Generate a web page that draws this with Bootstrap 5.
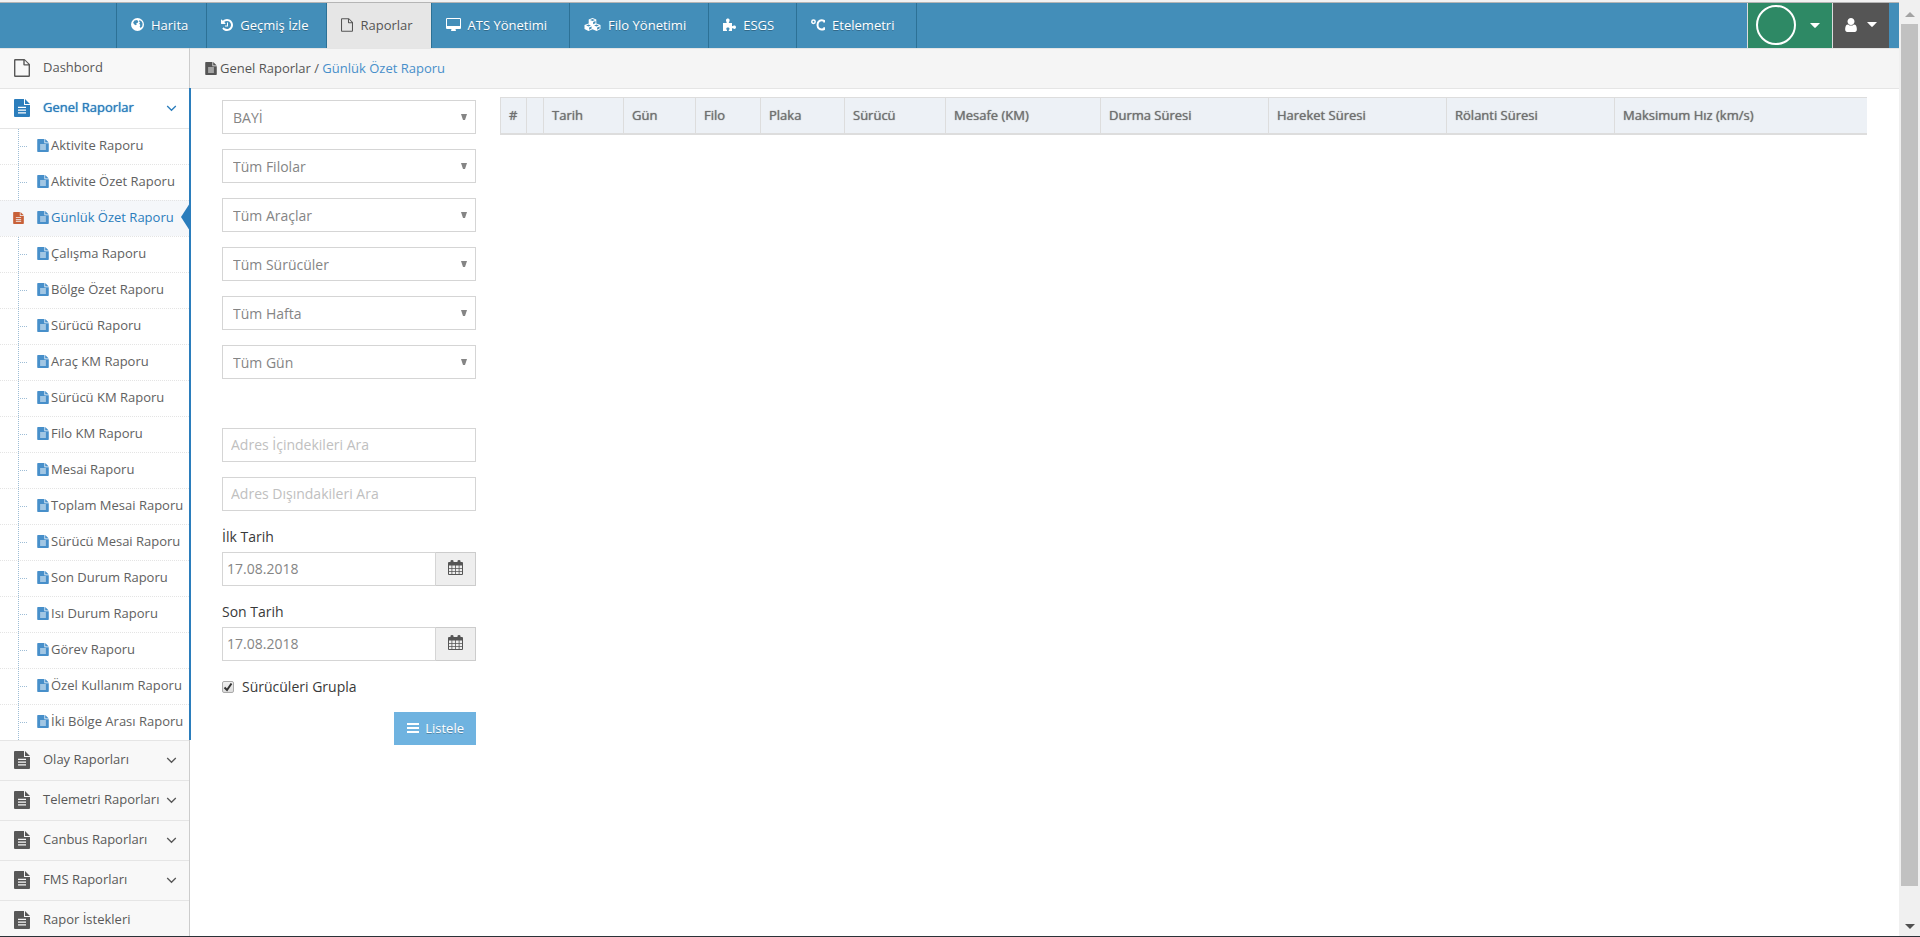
<!DOCTYPE html>
<html lang="tr">
<head>
<meta charset="utf-8">
<meta name="viewport" content="width=device-width, initial-scale=1">
<title>Günlük Özet Raporu</title>
<link href="https://cdn.jsdelivr.net/npm/bootstrap@5.3.0/dist/css/bootstrap.min.css" rel="stylesheet">
<style>
body { font: 13px/20px "Open Sans", sans-serif; color: #393939; background: #fff; }
svg { display: block; flex: none; fill: currentColor; }
a { text-decoration: none; color: inherit; }
.shell { height: 100vh; border-bottom: 1px solid #2b3238; }
.view { border-top: 2px solid #f2f2f2; }

/* top bar */
.topbar { height: 46px; background: #438eb9; border-top: 1px solid #b5b5b5; color: #fff; }
.brand-slot { width: 117px; border-right: 1px solid #2c7196; }
.topbar .nav-link { padding: 8px 18px 10px 14px; gap: 7px; color: #fff; border-right: 1px solid #2c7196; text-shadow: 0 1px 0 rgba(0,0,0,.25); line-height: 20px; }
.topbar .nav-link.roomy { padding-right: 22px; }
.topbar .nav-link.active { background: #e6e6e6; color: #555; text-shadow: none; }
.tool { border: 0; border-left: 1px solid #ddd; color: #fff; padding: 0; border-radius: 0; }
.tool-green { width: 85px; background: #2e8965; padding: 0 12px 0 8px; }
.tool-dark { width: 57px; background: #555; padding: 0 12px 2px 11px; margin-right: 10px; }
.ring { width: 40px; height: 40px; border: 2px solid #fff; border-radius: 50%; margin-bottom: 2px; }

/* side menu */
.side { width: 190px; background: #f8f8f8; border-right: 1px solid #ccc; }
.side-item { border-top: 1px solid #e5e5e5; height: 40px; padding: 0 12px 3px 14px; color: #585858; white-space: nowrap; }
.side-item > svg { margin-top: 2px; }
.side-item > svg:first-child { margin-right: 13px; }
.side-open { position: relative; background: #fff; }
.side-open::after { content: ""; position: absolute; right: -2px; top: 0; bottom: 0; width: 2px; background: #2b7dbc; }
.side-open > .side-item { color: #2b7dbc; text-shadow: 0 0 1px #2b7dbc; }
.sub { position: relative; border-top: 1px solid #e5e5e5; }
.sub::before { content: ""; position: absolute; left: 18px; top: 0; bottom: 0; border-left: 1px dotted #9dbdd6; }
.sub li { position: relative; height: 36px; border-top: 1px dotted #e4e4e4; }
.sub li:first-child { border-top: 0; height: 35px; }
.sub li::before { content: ""; position: absolute; left: 20px; top: 17px; width: 7px; border-top: 1px dotted #9dbdd6; }
.sub a { height: 35px; padding: 0 0 4px 37px; gap: 2px; color: #616161; white-space: nowrap; }
.sub a > svg { color: #478fca; margin-top: 1px; }
.sub .current { background: #f5f7fa; }
.sub .current::before { display: none; }
.sub .current a { color: #2b7dbc; }
.sub .current::after { content: ""; position: absolute; right: -1px; top: 2px; border: solid transparent; border-width: 14px 9px 14px 0; border-right-color: #2b7dbc; }
.mark-now { position: absolute; left: 13px; top: 11px; color: #c86139; }

/* content */
.crumbs { height: 41px; background: #f5f5f5; border-top: 1px solid #e5e5e5; border-bottom: 1px solid #e5e5e5; padding: 0 0 1px 15px; gap: 3px; color: #555; }
.crumbs a { color: #478fca; }
.work { padding: 8px 34px 0 32px; gap: 24px; }
.filters { width: 254px; gap: 15px; padding-top: 3px; font-size: 14px; line-height: 21px; }
.filters .form-control, .filters .form-select { height: 34px; border: 1px solid #d5d5d5; border-radius: 0; font-size: 14px; line-height: 20px; color: #858585; padding: 5px 8px 7px; }
.filters .form-select { padding: 7px 10px 5px; background: #fff url("data:image/svg+xml,%3Csvg xmlns='http://www.w3.org/2000/svg' width='6' height='6'%3E%3Cpath d='M0 0h6L4 6H2z' fill='%23858585'/%3E%3C/svg%3E") no-repeat right 8px top 13px / 6px 6px; }
.filters .form-control::placeholder { color: #c0c0c0; opacity: 1; }
.filters .date-box { padding-left: 4px; }
.filters label { display: block; }
.date-label { margin-bottom: 5px; }
.cal-btn { width: 41px; background: #eee; border: 1px solid #ccc; border-left: 0; border-radius: 0; color: #555; padding: 0 0 3px; }
.spare { height: 19px; }
.tick { appearance: none; width: 12px; height: 12px; margin: 0; border: 1px solid #aaa; border-radius: 2px; background: linear-gradient(#f0f0f0, #dcdcdc); }
.tick:checked { background: url("data:image/svg+xml,%3Csvg xmlns='http://www.w3.org/2000/svg' width='10' height='10'%3E%3Cpath d='M1.500 5.500L4 8 8.500 1.500' fill='none' stroke='%23333' stroke-width='2'/%3E%3C/svg%3E") center no-repeat, linear-gradient(#f0f0f0, #dcdcdc); }
.btn-list { background: #6fb3e0; color: #fff; border: 0; border-radius: 0; height: 33px; padding: 0 12px 1px 13px; gap: 6px; font-size: 13px; line-height: 20px; text-shadow: 0 1px 0 rgba(0,0,0,.25); }
.report { table-layout: fixed; width: 100%; margin: 0; }
.report th { height: 36px; padding: 0 8px; background: #edf1f6; color: #707070; font-weight: 400; text-shadow: 0 0 1px #707070; border: solid #ddd; border-width: 1px 0 2px 1px; white-space: nowrap; vertical-align: middle; }

/* scroll gutter */
.gutter { width: 21px; background: #f0f0f0; padding: 12px 2px 7px; }
.gutter-thumb { flex: 862; background: #c1c1c1; width: 17px; margin-top: 7px; }
.gutter-rest { flex: 38; }
</style>
</head>
<body>
<svg width="0" height="0" class="position-absolute" aria-hidden="true">
  <symbol id="doc" viewBox="0 0 16 18"><path fill-rule="evenodd" d="M1 0h9v6h6v11a1 1 0 0 1-1 1H1a1 1 0 0 1-1-1V1a1 1 0 0 1 1-1zM4 7.700v1.300h8V7.700zM4 10.400v1.300h8v-1.300zM4 13.200v1.300h8v-1.300zM11 0l5 5h-5z"/></symbol>
  <symbol id="page" viewBox="0 0 16 18"><path fill-rule="evenodd" d="M1.200 0H10.500L16 5.300V16.800A1.200 1.200 0 0 1 14.800 18H1.200A1.200 1.200 0 0 1 0 16.800V1.200A1.200 1.200 0 0 1 1.200 0zM1.400 1.400V16.600H14.600V6.600H10.300A1 1 0 0 1 9.300 5.600V1.400zM10.700 1.600V5.200H14.300z"/></symbol>
  <symbol id="chev" viewBox="0 0 10 7"><path d="M.7 1l4.300 4.300L9.300 1" fill="none" stroke="currentColor" stroke-width="1.300"/></symbol>
  <symbol id="caret" viewBox="0 0 10 5"><path d="M0 0h10L5.500 4.700h-1z"/></symbol>
  <symbol id="globe" viewBox="0 0 12 12"><path fill-rule="evenodd" d="M6 0a6 6 0 1 1 0 12A6 6 0 0 1 6 0zM3.200 2.300L2 4.200l.8 1.600 1.600.8 1-.9-.6-.9 1.400-.4.600-1.200L5.600 1.800zM8 1.900l-.6 1.300 1 .8-.8 1.100 1 1.400-.6 1.300.9 1.400 1.500-1.600.3-2.400-.6-1.800z"/></symbol>
  <symbol id="history" viewBox="128 128 1536 1536"><path d="M1664 896q0 156-61 298t-164 245-245 164-298 61q-172 0-327-72.500t-264-204.500q-7-10-6.500-22.500t8.500-20.500l137-138q10-9 25-9 16 2 23 12 73 95 179 147t225 52q104 0 198.500-40.500t163.500-109.500 109.500-163.500 40.500-198.500-40.500-198.500-109.500-163.500-163.500-109.500-198.500-40.500q-98 0-188 35.500t-160 101.500l137 138q31 30 14 69-17 40-59 40h-448q-26 0-45-19t-19-45v-448q0-42 40-59 39-17 69 14l130 129q107-101 244.500-156.500t284.500-55.500q156 0 298 61t245 164 164 245 61 298zm-640-288v448q0 14-9 23t-23 9h-320q-14 0-23-9t-9-23v-64q0-14 9-23t23-9h224v-352q0-14 9-23t23-9h64q14 0 23 9t9 23z"/></symbol>
  <symbol id="screen" viewBox="-64 0 1920 1664"><path d="M1728 992v-832q0-13-9.500-22.500t-22.500-9.500h-1600q-13 0-22.500 9.500t-9.500 22.500v832q0 13 9.500 22.500t22.500 9.500h1600q13 0 22.500-9.500t9.500-22.500zm128-832v1088q0 66-47 113t-113 47h-544q0 37 16 77.500t32 71 16 43.500q0 26-19 45t-45 19h-512q-26 0-45-19t-19-45q0-14 16-44t32-70 16-78h-544q-66 0-113-47t-47-113v-1088q0-66 47-113t113-47h1600q66 0 113 47t47 113z"/></symbol>
  <symbol id="cubes" viewBox="0 0 17 13"><path fill-rule="evenodd" d="M8.500 0l3.800 1.500v4L16.500 7v4L12.600 13 8.500 11.200 4.400 13 .5 11V7l4.200-1.500v-4zM8.500 1L6 2l2.500 1L11 2zM9.100 4v2.200L11.500 5.200V3zM4.500 6.500L2.100 7.500l2.400 1 2.400-1zM5.100 9.500v2.200l2.500-1.100V8.500zM12.500 6.500l-2.400 1 2.400 1 2.400-1zM13.100 9.500v2.200l2.500-1.100V8.500z"/></symbol>
  <symbol id="puzzle" viewBox="0 0 13 13"><path d="M0 5h3.600C4 4 2.800 3.500 3 2c.2-1 .9-1.500 1.800-1.500S6.500 1 6.600 2C6.800 3.500 5.500 4 5.900 5H9v3c.8.500 1.400-.5 2.300-.5 1 0 1.700.7 1.700 1.700s-.7 1.700-1.700 1.700c-.9 0-1.500-1-2.300-.5V13H5.800c-.3-1 .7-1.200.7-2.200 0-.8-.7-1.300-1.600-1.300s-1.600.5-1.600 1.300c0 1 1 1.200.7 2.200H0z"/></symbol>
  <symbol id="person" viewBox="256 128 1280 1536"><path d="M1536 1399q0 109-62.500 187t-150.500 78h-854q-88 0-150.500-78t-62.500-187q0-85 8.500-160.500t31.500-152 58.500-131 94-89 134.500-34.500q131 128 313 128t313-128q76 0 134.500 34.500t94 89 58.500 131 31.500 152 8.500 160.500zm-256-887q0 159-112.500 271.500t-271.500 112.500-271.500-112.500-112.500-271.500 112.500-271.500 271.500-112.500 271.500 112.500 112.500 271.500z"/></symbol>
  <symbol id="cal" viewBox="0 0 15 15"><path fill-rule="evenodd" d="M2.500 2V1a1.500 1 0 0 1 3 0v1h4V1a1.500 1 0 0 1 3 0v1H14a1 1 0 0 1 1 1v11a1 1 0 0 1-1 1H1a1 1 0 0 1-1-1V3a1 1 0 0 1 1-1zM1 5.500V8h2.500V5.500zm3.300 0V8h2.800V5.500zm3.600 0V8h2.800V5.500zm3.600 0V8H14V5.500zM1 8.700v2.500h2.500V8.700zm3.300 0v2.500h2.800V8.700zm3.600 0v2.500h2.800V8.700zm3.600 0v2.500H14V8.700zM1 12v2h2.500v-2zm3.300 0v2h2.800v-2zm3.600 0v2h2.800v-2zm3.600 0v2H14v-2z"/></symbol>
  <symbol id="degree" viewBox="0 0 14 12"><g fill="none" stroke="currentColor"><circle cx="2.500" cy="2.800" r="1.700" stroke-width="1.500"/><path d="M13.200 3.600V1.900C9.500.4 6.500 2.200 6.500 6s3 5.500 6.800 4V8.200" stroke-width="2"/></g></symbol>
  <symbol id="bars" viewBox="0 0 12 10"><path d="M0 0h12v2H0zM0 4h12v2H0zM0 8h12v2H0z"/></symbol>
</svg>

<div class="shell d-flex overflow-hidden">
  <div class="view d-flex flex-column flex-grow-1 overflow-hidden">
    <header class="topbar d-flex flex-shrink-0">
      <div class="brand-slot flex-shrink-0"></div>
      <nav class="nav flex-nowrap flex-grow-1">
        <a class="nav-link d-flex align-items-center" href="#"><svg width="13" height="13"><use href="#globe"/></svg>Harita</a>
        <a class="nav-link d-flex align-items-center" href="#"><svg width="12" height="12"><use href="#history"/></svg>Geçmiş İzle</a>
        <a class="nav-link active d-flex align-items-center" href="#"><svg width="12" height="14"><use href="#page"/></svg>Raporlar</a>
        <a class="nav-link roomy d-flex align-items-center" href="#"><svg width="15" height="13"><use href="#screen"/></svg>ATS Yönetimi</a>
        <a class="nav-link roomy d-flex align-items-center" href="#"><svg width="17" height="13"><use href="#cubes"/></svg>Filo Yönetimi</a>
        <a class="nav-link roomy d-flex align-items-center" href="#"><svg width="13" height="13"><use href="#puzzle"/></svg>ESGS</a>
        <a class="nav-link roomy d-flex align-items-center" href="#"><svg width="14" height="12"><use href="#degree"/></svg>Etelemetri</a>
      </nav>
      <button type="button" class="tool tool-green d-flex align-items-center justify-content-between" aria-label="Firma"><span class="ring"></span><svg width="10" height="5"><use href="#caret"/></svg></button>
      <button type="button" class="tool tool-dark d-flex align-items-center justify-content-between" aria-label="Hesap"><svg width="14" height="14"><use href="#person"/></svg><svg width="10" height="5"><use href="#caret"/></svg></button>
    </header>

    <div class="d-flex flex-grow-1">
      <aside class="side flex-shrink-0">
        <a class="side-item d-flex align-items-center" href="#"><svg width="16" height="18"><use href="#page"/></svg>Dashbord</a>
        <div class="side-open">
          <a class="side-item d-flex align-items-center" href="#"><svg width="16" height="18"><use href="#doc"/></svg>Genel Raporlar<svg class="ms-auto" width="11" height="7"><use href="#chev"/></svg></a>
          <ul class="sub list-unstyled m-0">
            <li><a class="d-flex align-items-center" href="#"><svg width="12" height="13"><use href="#doc"/></svg>Aktivite Raporu</a></li>
            <li><a class="d-flex align-items-center" href="#"><svg width="12" height="13"><use href="#doc"/></svg>Aktivite Özet Raporu</a></li>
            <li class="current"><svg class="mark-now" width="11" height="12"><use href="#doc"/></svg><a class="d-flex align-items-center" href="#"><svg width="12" height="13"><use href="#doc"/></svg>Günlük Özet Raporu</a></li>
            <li><a class="d-flex align-items-center" href="#"><svg width="12" height="13"><use href="#doc"/></svg>Çalışma Raporu</a></li>
            <li><a class="d-flex align-items-center" href="#"><svg width="12" height="13"><use href="#doc"/></svg>Bölge Özet Raporu</a></li>
            <li><a class="d-flex align-items-center" href="#"><svg width="12" height="13"><use href="#doc"/></svg>Sürücü Raporu</a></li>
            <li><a class="d-flex align-items-center" href="#"><svg width="12" height="13"><use href="#doc"/></svg>Araç KM Raporu</a></li>
            <li><a class="d-flex align-items-center" href="#"><svg width="12" height="13"><use href="#doc"/></svg>Sürücü KM Raporu</a></li>
            <li><a class="d-flex align-items-center" href="#"><svg width="12" height="13"><use href="#doc"/></svg>Filo KM Raporu</a></li>
            <li><a class="d-flex align-items-center" href="#"><svg width="12" height="13"><use href="#doc"/></svg>Mesai Raporu</a></li>
            <li><a class="d-flex align-items-center" href="#"><svg width="12" height="13"><use href="#doc"/></svg>Toplam Mesai Raporu</a></li>
            <li><a class="d-flex align-items-center" href="#"><svg width="12" height="13"><use href="#doc"/></svg>Sürücü Mesai Raporu</a></li>
            <li><a class="d-flex align-items-center" href="#"><svg width="12" height="13"><use href="#doc"/></svg>Son Durum Raporu</a></li>
            <li><a class="d-flex align-items-center" href="#"><svg width="12" height="13"><use href="#doc"/></svg>Isı Durum Raporu</a></li>
            <li><a class="d-flex align-items-center" href="#"><svg width="12" height="13"><use href="#doc"/></svg>Görev Raporu</a></li>
            <li><a class="d-flex align-items-center" href="#"><svg width="12" height="13"><use href="#doc"/></svg>Özel Kullanım Raporu</a></li>
            <li><a class="d-flex align-items-center" href="#"><svg width="12" height="13"><use href="#doc"/></svg>İki Bölge Arası Raporu</a></li>
          </ul>
        </div>
        <a class="side-item d-flex align-items-center" href="#"><svg width="16" height="18"><use href="#doc"/></svg>Olay Raporları<svg class="ms-auto" width="11" height="7"><use href="#chev"/></svg></a>
        <a class="side-item d-flex align-items-center" href="#"><svg width="16" height="18"><use href="#doc"/></svg>Telemetri Raporları<svg class="ms-auto" width="11" height="7"><use href="#chev"/></svg></a>
        <a class="side-item d-flex align-items-center" href="#"><svg width="16" height="18"><use href="#doc"/></svg>Canbus Raporları<svg class="ms-auto" width="11" height="7"><use href="#chev"/></svg></a>
        <a class="side-item d-flex align-items-center" href="#"><svg width="16" height="18"><use href="#doc"/></svg>FMS Raporları<svg class="ms-auto" width="11" height="7"><use href="#chev"/></svg></a>
        <a class="side-item d-flex align-items-center" href="#"><svg width="16" height="18"><use href="#doc"/></svg>Rapor İstekleri</a>
      </aside>

      <main class="flex-grow-1">
        <div class="crumbs d-flex align-items-center"><svg width="12" height="13"><use href="#doc"/></svg><span>Genel Raporlar / <a href="#">Günlük Özet Raporu</a></span></div>
        <div class="work d-flex align-items-start">
          <form class="filters d-flex flex-column flex-shrink-0">
            <select class="form-select" aria-label="Bayi"><option>BAYİ</option></select>
            <select class="form-select" aria-label="Filo"><option>Tüm Filolar</option></select>
            <select class="form-select" aria-label="Araç"><option>Tüm Araçlar</option></select>
            <select class="form-select" aria-label="Sürücü"><option>Tüm Sürücüler</option></select>
            <select class="form-select" aria-label="Hafta"><option>Tüm Hafta</option></select>
            <select class="form-select" aria-label="Gün"><option>Tüm Gün</option></select>
            <div class="spare"></div>
            <input class="form-control" type="text" placeholder="Adres İçindekileri Ara" aria-label="Adres İçindekileri Ara">
            <input class="form-control" type="text" placeholder="Adres Dışındakileri Ara" aria-label="Adres Dışındakileri Ara">
            <div>
              <label class="date-label" for="first">İlk Tarih</label>
              <div class="input-group"><input class="form-control date-box" id="first" type="text" value="17.08.2018"><button type="button" class="cal-btn d-flex align-items-center justify-content-center" aria-label="İlk tarihi seç"><svg width="15" height="15"><use href="#cal"/></svg></button></div>
            </div>
            <div>
              <label class="date-label" for="last">Son Tarih</label>
              <div class="input-group"><input class="form-control date-box" id="last" type="text" value="17.08.2018"><button type="button" class="cal-btn d-flex align-items-center justify-content-center" aria-label="Son tarihi seç"><svg width="15" height="15"><use href="#cal"/></svg></button></div>
            </div>
            <div class="d-flex align-items-center gap-2"><input class="tick" type="checkbox" id="group" checked><label for="group">Sürücüleri Grupla</label></div>
            <button type="button" class="btn-list d-flex align-items-center align-self-end"><svg width="12" height="10"><use href="#bars"/></svg>Listele</button>
          </form>
          <div class="flex-grow-1">
            <table class="report">
              <colgroup><col style="width:26px"><col style="width:17px"><col style="width:80px"><col style="width:72px"><col style="width:65px"><col style="width:84px"><col style="width:101px"><col style="width:155px"><col style="width:168px"><col style="width:178px"><col style="width:168px"><col style="width:252px"></colgroup>
              <thead><tr><th>#</th><th></th><th>Tarih</th><th>Gün</th><th>Filo</th><th>Plaka</th><th>Sürücü</th><th>Mesafe (KM)</th><th>Durma Süresi</th><th>Hareket Süresi</th><th>Rölanti Süresi</th><th>Maksimum Hız (km/s)</th></tr></thead>
            </table>
          </div>
        </div>
      </main>
    </div>
  </div>
  <div class="gutter d-flex flex-column align-items-center flex-shrink-0" aria-hidden="true">
    <svg width="10" height="5" color="#a3a3a3"><path d="M0 5h10L5 0z"/></svg>
    <div class="gutter-thumb"></div>
    <div class="gutter-rest"></div>
    <svg width="10" height="5" color="#505050"><path d="M0 0h10L5 5z"/></svg>
  </div>
</div>
<script src="https://cdn.jsdelivr.net/npm/bootstrap@5.3.0/dist/js/bootstrap.bundle.min.js"></script>
</body>
</html>
